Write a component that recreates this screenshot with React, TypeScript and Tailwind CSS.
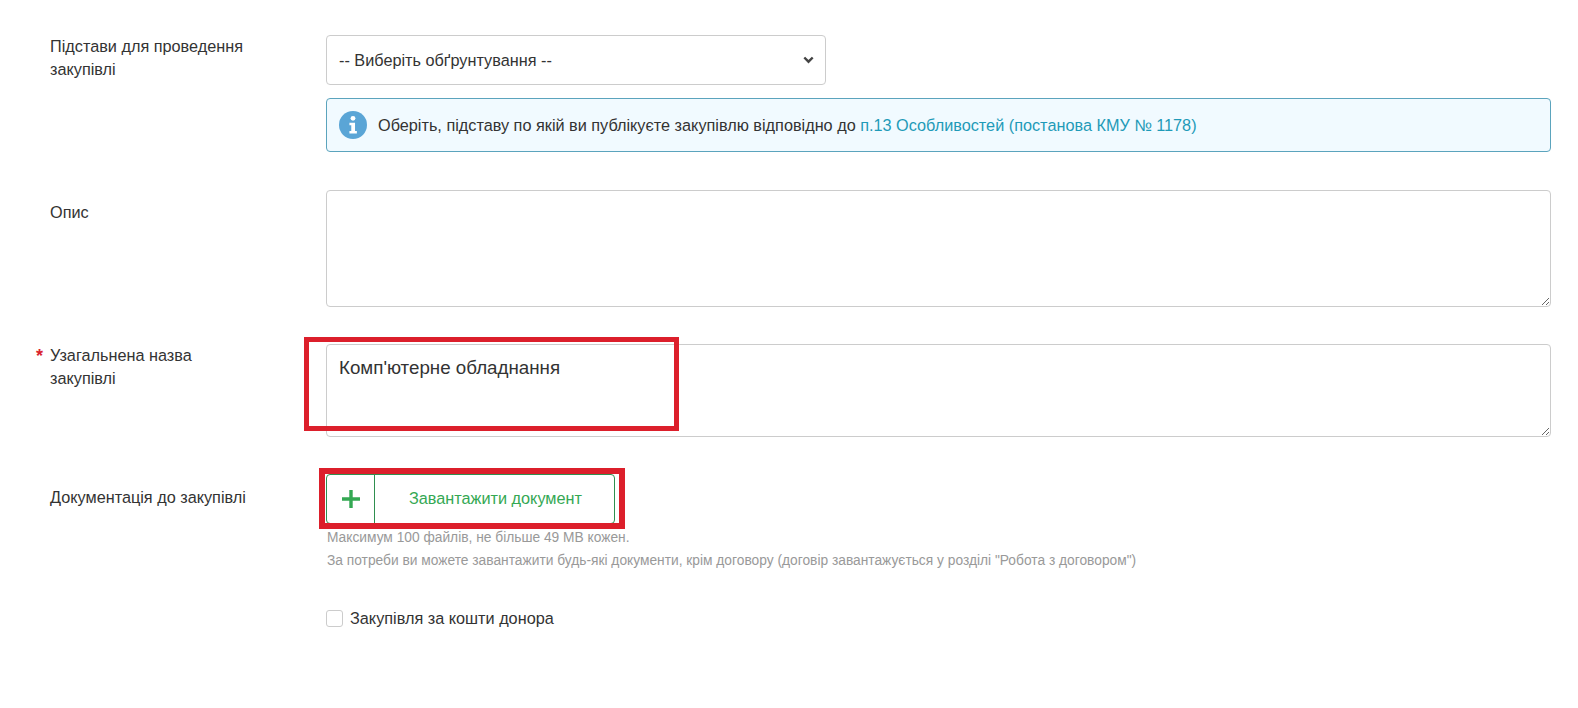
import React from "react";

function Label({ children, required }: { children: React.ReactNode; required?: boolean }) {
  return (
    <div className="relative w-[326px] shrink-0 pl-[50px] pr-[72px] text-[16.25px] leading-[23px] text-[#333333]">
      {required && (
        <span className="absolute left-[36px] top-[1px] text-[18px] font-bold leading-[23px] text-[#d9232e]">*</span>
      )}
      {children}
    </div>
  );
}

export default function App() {
  return (
    <div className="relative h-[708px] w-[1578px] overflow-hidden bg-white font-['Liberation_Sans',Arial,sans-serif] text-[#333333]">
      <div className="flex pr-[27px] pt-[35px]">
        <Label>Підстави для проведення закупівлі</Label>
        <div className="flex min-w-0 flex-1 flex-col">
          <div className="relative h-[50px] w-[500px]">
            <select className="h-full w-full appearance-none rounded-[4px] border border-[#cccccc] bg-white pl-[12px] pr-8 text-[16.25px] text-[#333333]">
              <option>-- Виберіть обґрунтування --</option>
            </select>
            <svg className="absolute right-[12px] top-[21px]" width="11" height="8" viewBox="0 0 11 8" fill="none">
              <path d="M1.3 1.5 5.5 5.7 9.7 1.5" stroke="#444444" strokeWidth="2.4" />
            </svg>
          </div>
          <div className="mt-[13px] flex h-[54px] items-center rounded-[4px] border border-[#5ba4bd] bg-[#f1faff] pl-[12px] text-[16.25px]">
            <svg width="28" height="28" viewBox="0 0 29 29" className="shrink-0">
              <circle cx="14.5" cy="14.5" r="14.5" fill="#5aa5d6" />
              <circle cx="14.5" cy="7.6" r="2.5" fill="#ffffff" />
              <path d="M10.8 12.1h5.8v8.6h1.9v2.6h-7.7v-2.6h1.9v-6h-1.9z" fill="#ffffff" />
            </svg>
            <span className="ml-[11px]">
              Оберіть, підставу по якій ви публікуєте закупівлю відповідно до{" "}
              <a className="text-[#1f9ab8]">п.13 Особливостей (постанова КМУ № 1178)</a>
            </span>
          </div>
        </div>
      </div>

      <div className="mt-[38px] flex pr-[27px]">
        <div className="pt-[11px]">
          <Label>Опис</Label>
        </div>
        <textarea className="block h-[117px] min-w-0 flex-1 rounded-[4px] border border-[#cccccc] bg-white" />
      </div>

      <div className="mt-[37px] flex pr-[27px]">
        <Label required>Узагальнена назва закупівлі</Label>
        <textarea
          className="block h-[93px] min-w-0 flex-1 rounded-[4px] border border-[#cccccc] bg-white px-[12px] py-[11px] text-[18.75px] leading-[24px] text-[#333333]"
          defaultValue="Комп'ютерне обладнання"
        />
      </div>

      <div className="mt-[37px] flex pr-[27px]">
        <div className="pt-[12px]">
          <Label>Документація до закупівлі</Label>
        </div>
        <div className="min-w-0 flex-1">
          <button className="flex h-[50px] w-[289px] items-stretch rounded-[4px] border border-[#2f8f4f] bg-white text-[#34a853]">
            <span className="flex w-[48px] items-center justify-center border-r border-[#2f8f4f]">
              <svg width="18" height="18" viewBox="0 0 18 18">
                <path d="M7.3 0h3.4v7.3H18v3.4h-7.3V18H7.3v-7.3H0V7.3h7.3z" fill="#34a853" />
              </svg>
            </span>
            <span className="flex flex-1 items-center justify-center pb-[2px] pl-[2px] text-[16.25px]">Завантажити документ</span>
          </button>
          <div className="mt-[2px] pl-[1px] text-[13.77px] leading-[23px] text-[#999999]">
            <div>Максимум 100 файлів, не більше 49 МВ кожен.</div>
            <div>За потреби ви можете завантажити будь-які документи, крім договору (договір завантажується у розділі "Робота з договором")</div>
          </div>
          <label className="mt-[38px] flex items-center">
            <span className="h-[17px] w-[17px] rounded-[3px] border border-[#cccccc] bg-white" />
            <span className="ml-[7px] text-[16.25px] leading-[17px]">Закупівля за кошти донора</span>
          </label>
        </div>
      </div>

      <div className="pointer-events-none absolute left-[304px] top-[337px] h-[94px] w-[375px] border-[5px] border-[#dc1f2b]" />
      <div className="pointer-events-none absolute left-[319px] top-[468px] h-[61px] w-[306px] border-[6px] border-[#dc1f2b]" />
    </div>
  );
}
